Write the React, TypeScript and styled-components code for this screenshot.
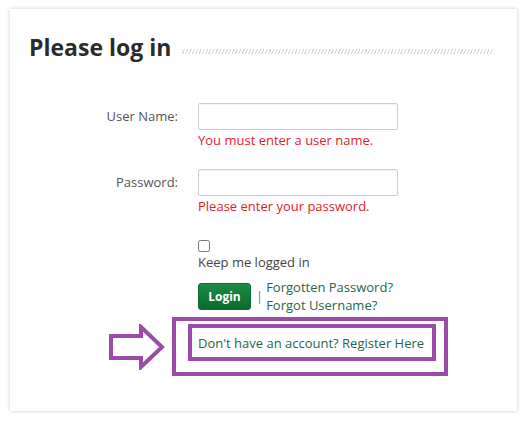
import React from "react";
import styled, { createGlobalStyle } from "styled-components";

const Global = createGlobalStyle`
  html, body { margin: 0; padding: 0; background: #fff; }
  body { font-family: "Open Sans", "Liberation Sans", Arial, sans-serif; }
  * { box-sizing: border-box; }
`;

const Page = styled.div`
  width: 529px;
  height: 421px;
  padding: 9px 12px 10px 10px;
`;

const Card = styled.div`
  width: 507px;
  height: 402px;
  background: #fff;
  box-shadow: 0 0 4px rgba(0, 0, 0, 0.22);
  padding: 22px 23px 0 19px;
`;

const HeadingRow = styled.div`
  display: flex;
  align-items: center;
  gap: 10px;
`;

const Title = styled.h2`
  margin: 0;
  font-size: 23px;
  font-weight: 700;
  color: #2b2b2b;
  line-height: 32px;
  white-space: nowrap;
`;

const Stripes = styled.div`
  flex: 1;
  height: 5px;
  margin-top: 8px;
  background: repeating-linear-gradient(
    -65deg,
    #d4d4d4 0px,
    #d4d4d4 1px,
    transparent 1px,
    transparent 3px
  );
`;

const Form = styled.div`
  display: grid;
  grid-template-columns: 149px 1fr;
  column-gap: 20px;
  margin-top: 40px;
`;

const Label = styled.label`
  text-align: right;
  font-size: 13px;
  color: #555;
  line-height: 27px;
`;

const Field = styled.div<{ $mb?: number }>`
  display: flex;
  flex-direction: column;
  align-items: flex-start;
  margin-bottom: ${(p) => p.$mb ?? 0}px;
`;

const Input = styled.input`
  width: 200px;
  height: 27px;
  border: 1px solid #ccc;
  border-radius: 2px;
  box-shadow: inset 0 1px 1px rgba(0, 0, 0, 0.05);
  padding: 0 6px;
  font-size: 13px;
  outline: none;
`;

const ErrorText = styled.span`
  color: #e31b2a;
  font-size: 13px;
  line-height: 20px;
`;

const Check = styled.input`
  width: 12px;
  height: 12px;
  margin: 0;
  accent-color: #888;
`;

const KeepText = styled.span`
  font-size: 13px;
  color: #444;
  line-height: 20px;
`;

const LoginRow = styled.div`
  display: flex;
  align-items: center;
  margin-top: 6px;
`;

const LoginButton = styled.button`
  width: 53px;
  height: 27px;
  border: 1px solid #0b6a30;
  border-radius: 3px;
  background: linear-gradient(#1d8c46, #0a6b2e);
  color: #fff;
  font-family: "Open Sans", "Liberation Sans", Arial, sans-serif;
  font-weight: 700;
  font-size: 12px;
  padding: 0;
  cursor: pointer;
`;

const Sep = styled.span`
  color: #777;
  font-size: 13px;
  margin: 0 3px 0 5px;
`;

const Links = styled.div`
  display: flex;
  flex-direction: column;
`;

const Link = styled.a`
  color: #27654c;
  font-size: 13px;
  line-height: 18px;
  text-decoration: none;
  white-space: nowrap;
`;

const RegisterRow = styled.div`
  display: flex;
  align-items: center;
  margin: 3px 0 0 79px;
  gap: 6px;
`;

const Outer = styled.div`
  width: 276px;
  height: 59px;
  border: 4px solid #9b4ba8;
  padding: 3px 8px 0 12px;
`;

const Inner = styled.div`
  width: 248px;
  height: 37px;
  border: 4px solid #9b4ba8;
  display: flex;
  align-items: center;
  padding-left: 6px;
`;

export default function App() {
  return (
    <>
      <Global />
      <Page>
        <Card>
          <HeadingRow>
            <Title>Please log in</Title>
            <Stripes />
          </HeadingRow>
          <Form>
            <Label>User Name:</Label>
            <Field $mb={19}>
              <Input type="text" />
              <ErrorText>You must enter a user name.</ErrorText>
            </Field>
            <Label>Password:</Label>
            <Field $mb={24}>
              <Input type="password" />
              <ErrorText>Please enter your password.</ErrorText>
            </Field>
            <span />
            <Field>
              <Check type="checkbox" />
              <KeepText>Keep me logged in</KeepText>
              <LoginRow>
                <LoginButton>Login</LoginButton>
                <Sep>|</Sep>
                <Links>
                  <Link href="#">Forgotten Password?</Link>
                  <Link href="#">Forgot Username?</Link>
                </Links>
              </LoginRow>
            </Field>
          </Form>
          <RegisterRow>
            <svg width="58" height="46" viewBox="0 0 58 46">
              <path
                d="M3 12 H33 V3 L54 23 L33 43 V34 H3 Z"
                fill="none"
                stroke="#9b4ba8"
                strokeWidth="4"
                strokeLinejoin="miter"
              />
            </svg>
            <Outer>
              <Inner>
                <Link href="#">Don't have an account? Register Here</Link>
              </Inner>
            </Outer>
          </RegisterRow>
        </Card>
      </Page>
    </>
  );
}
